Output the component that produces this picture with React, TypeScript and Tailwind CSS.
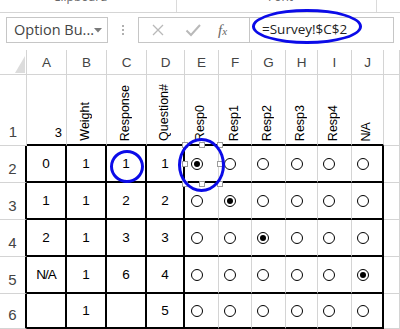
import React from "react";

const LETTERS = ["", "A", "B", "C", "D", "E", "F", "G", "H", "I", "J", ""];
const HEADS = ["Weight", "Response", "Question#", "Resp0", "Resp1", "Resp2", "Resp3", "Resp4", "N/A"];
const DATA: { v: string[]; sel: number }[] = [
  { v: ["0", "1", "1", "1"], sel: 0 },
  { v: ["1", "1", "2", "2"], sel: 1 },
  { v: ["2", "1", "3", "3"], sel: 2 },
  { v: ["N/A", "1", "6", "4"], sel: 5 },
  { v: ["", "1", "", "5"], sel: -1 },
];

function rightB(r: number, c: number) {
  if (r >= 2 && (c <= 4 || c === 10)) return "border-r-2 border-r-black";
  return "border-r border-r-[#d4d4d4]";
}
function bottomB(r: number, c: number) {
  if (r >= 1 && c >= 1 && c <= 10) return "border-b-2 border-b-black";
  return "border-b border-b-[#d4d4d4]";
}

function Radio({ on }: { on: boolean }) {
  return (
    <span className="w-[12px] h-[12px] rounded-full border border-black bg-white flex items-center justify-center shrink-0">
      {on && <span className="w-[6px] h-[6px] rounded-full bg-black" />}
    </span>
  );
}

function Handle({ x, y }: { x: number; y: number }) {
  return (
    <span
      className="absolute w-[6px] h-[6px] bg-white border border-[#9c9c9c]"
      style={{ left: x - 3, top: y - 3 }}
    />
  );
}

export default function App() {
  const cells: React.ReactNode[] = [];
  LETTERS.forEach((L, c) => {
    cells.push(
      <div
        key={`h${c}`}
        className={`${rightB(0, c)} ${bottomB(0, c)} flex items-center justify-center pt-[3px] text-[13.5px] text-[#444] relative`}
      >
        {c === 0 ? (
          <svg width="10" height="17" viewBox="0 0 10 17" className="absolute right-[1px] bottom-[1px]">
            <polygon points="10,0 10,17 0,17" fill="#dcdcdc" />
          </svg>
        ) : (
          L
        )}
      </div>
    );
  });
  for (let c = 0; c < 12; c++) {
    let content: React.ReactNode = null;
    let extra = "";
    if (c === 0) {
      content = <span className="text-[15px] text-[#444]">1</span>;
      extra = "flex items-end justify-center pb-[2px]";
    } else if (c === 1) {
      content = <span className="text-[13px] text-black">3</span>;
      extra = "flex items-end justify-end pr-[4px] pb-[2px]";
    } else if (c >= 2 && c <= 10) {
      const t = HEADS[c - 2];
      content = (
        <span
          className={`[writing-mode:vertical-rl] rotate-180 text-[12.5px] leading-[13px] text-black whitespace-nowrap ${t === "N/A" ? "tracking-[-0.8px]" : ""}`}
        >
          {t}
        </span>
      );
      extra = "flex items-end justify-center pb-[3px] pr-[2px]";
    }
    cells.push(
      <div key={`r1_${c}`} className={`${rightB(1, c)} ${bottomB(1, c)} ${extra}`}>
        {content}
      </div>
    );
  }
  DATA.forEach((row, i) => {
    const r = i + 2;
    for (let c = 0; c < 12; c++) {
      let content: React.ReactNode = null;
      let extra = "";
      if (c === 0) {
        content = <span className="text-[15px] text-[#444]">{r}</span>;
        extra = "flex items-end justify-center pb-[2px]";
      } else if (c >= 1 && c <= 4) {
        const v = row.v[c - 1];
        content = (
          <span className={`text-[13.5px] text-black ${v === "N/A" ? "tracking-[-1px]" : ""}`}>{v}</span>
        );
        extra = "flex items-center justify-center pt-[1px]";
      } else if (c >= 5 && c <= 10) {
        content = <Radio on={row.sel === c - 5} />;
        extra = c === 5 ? "flex items-center pl-[6px]" : "flex items-center pl-[5px]";
      }
      cells.push(
        <div key={`r${r}_${c}`} className={`${rightB(r, c)} ${bottomB(r, c)} ${extra}`}>
          {content}
        </div>
      );
    }
  });

  return (
    <div className="relative w-[400px] h-[329px] overflow-hidden bg-white font-['Liberation_Sans',Arial,sans-serif]">
      <div className="flex h-[13px] border-b border-b-[#d5d5d5] overflow-hidden font-['Open_Sans',sans-serif] text-[12px] text-[#666]">
        <div className="w-[177px] border-r border-r-[#dadada] flex items-start pl-[53px]">
          <span className="-mt-[11px] leading-[16px]">Clipboard</span>
        </div>
        <div className="w-[200px] border-r border-r-[#dadada] flex items-start pl-[91px]">
          <span className="-mt-[11px] leading-[16px]">Font</span>
        </div>
      </div>
      <div className="flex items-start h-[37px] pt-[4px] font-['Open_Sans',sans-serif]">
        <div className="ml-[6px] w-[102px] h-[26px] border border-[#c6c6c6] flex items-center pl-[7px] pr-[6px] justify-between">
          <span className="text-[14.5px] text-[#444] leading-none whitespace-nowrap">Option Bu...</span>
          <svg width="8" height="5" viewBox="0 0 8 5" className="shrink-0">
            <polygon points="0,0 8,0 4,4.5" fill="#7a7a7a" />
          </svg>
        </div>
        <div className="w-[30px] h-[26px] flex flex-col items-center justify-center gap-[2px]">
          <span className="w-[2px] h-[2px] bg-[#b0b0b0]" />
          <span className="w-[2px] h-[2px] bg-[#b0b0b0]" />
          <span className="w-[2px] h-[2px] bg-[#b0b0b0]" />
        </div>
        <div className="w-[256px] h-[26px] border border-[#c6c6c6] flex items-stretch">
          <div className="w-[111px] border-r border-r-[#c6c6c6] flex items-center">
            <svg width="14" height="14" viewBox="0 0 14 14" className="ml-[12px]">
              <path d="M2 2 L12 12 M12 2 L2 12" stroke="#b9b9b9" strokeWidth="1.3" fill="none" />
            </svg>
            <svg width="16" height="14" viewBox="0 0 16 14" className="ml-[20px]">
              <path d="M1.5 7.5 L6 12 L15 2" stroke="#b9b9b9" strokeWidth="2" fill="none" />
            </svg>
            <span className="ml-[17px] font-['Liberation_Serif',serif] italic text-[15px] text-[#666] leading-none">
              f<span className="text-[11px]">x</span>
            </span>
          </div>
          <div className="flex items-center pl-[12px]">
            <span className="text-[13.5px] text-[#222] leading-none whitespace-nowrap">=Survey!$C$2</span>
          </div>
        </div>
      </div>
      <div className="grid grid-cols-[27px_40px_40px_40px_38px_34px_33px_34px_32px_34px_32px_16px] grid-rows-[25px_71px_37px_37px_37px_37px_35px]">
        {cells}
      </div>
      <Handle x={185} y={145} />
      <Handle x={202} y={145} />
      <Handle x={220} y={145} />
      <Handle x={185} y={164} />
      <Handle x={220} y={164} />
      <Handle x={185} y={184} />
      <Handle x={202} y={184} />
      <Handle x={220} y={184} />
      <div className="absolute left-[252px] top-[9px] w-[110px] h-[35px] rounded-[50%] border-[3px] border-[#0b0be8]" />
      <div className="absolute left-[110px] top-[150px] w-[34px] h-[33px] rounded-[50%] border-[3px] border-[#0b0be8]" />
      <div className="absolute left-[178px] top-[138px] w-[47px] h-[54px] rounded-[50%] border-[3px] border-[#0b0be8]" />
    </div>
  );
}
